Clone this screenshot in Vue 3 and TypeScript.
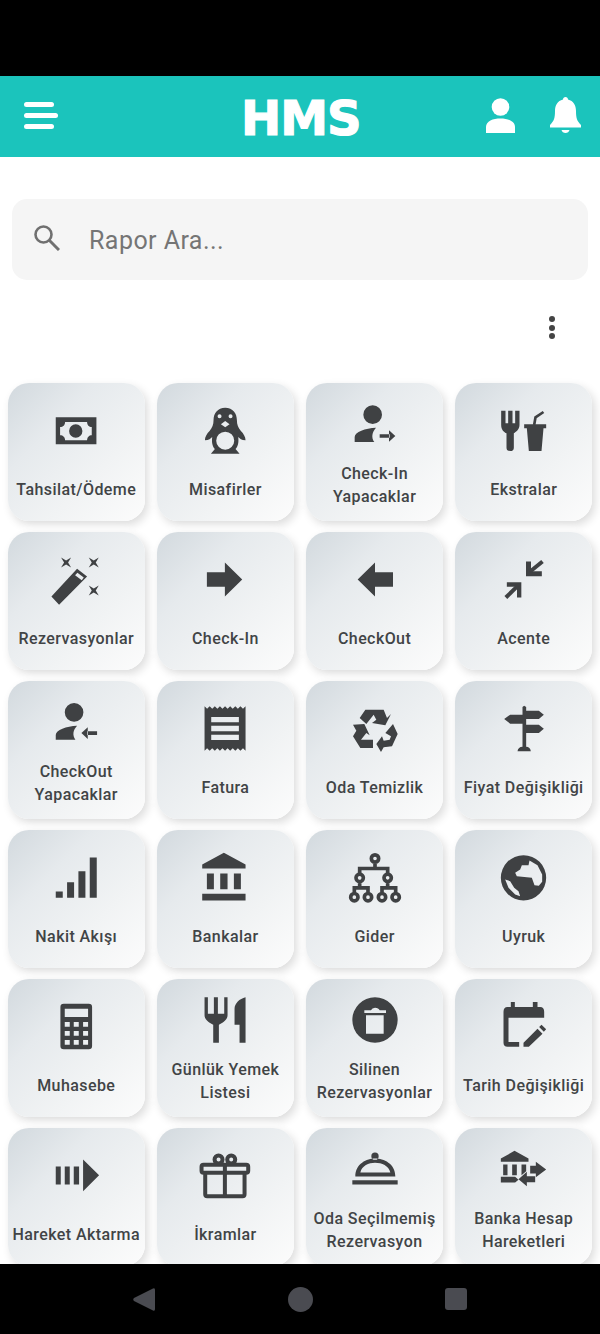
<script setup lang="ts">
interface Shape { d: string; sw?: number }
interface Item { label: string; vb: string; shapes: Shape[] }

const circle = (cx: number, cy: number, r: number): string =>
  `M${cx - r} ${cy}a${r} ${r} 0 1 0 ${r * 2} 0a${r} ${r} 0 1 0 ${-r * 2} 0Z`
const rect = (x: number, y: number, x2: number, y2: number): string =>
  `M${x} ${y}H${x2}V${y2}H${x}Z`
const star = (cx: number, cy: number): string =>
  `M${cx - 15} ${cy - 15}L${cx} ${cy - 6}L${cx + 15} ${cy - 15}L${cx + 6} ${cy}L${cx + 15} ${cy + 15}L${cx} ${cy + 6}L${cx - 15} ${cy + 15}L${cx - 6} ${cy}Z`

function receipt(): string {
  const x0 = 615
  const step = 123 / 8
  let d = `M${x0} 95`
  for (let i = 0; i < 8; i++) {
    d += `L${x0 + step * (i + 0.5)} 102L${x0 + step * (i + 1)} 95`
  }
  d += 'V228'
  for (let i = 7; i >= 0; i--) {
    d += `L${x0 + step * (i + 0.5)} 221L${x0 + step * i} 228`
  }
  return d + 'Z'
}

const keys: string[] = []
for (const y of [143, 170, 197]) {
  for (const x of [195, 222, 250]) keys.push(rect(x, y, x + 15, y + 14))
}

const items: Item[] = [
  { label: 'Tahsilat/Ödeme', vb: '156.75 96', shapes: [{ d: rect(168, 127, 290, 208) + 'M196 141H262C262 150 268 156 276 156V181C268 181 262 187 262 196H196C196 187 190 181 181 181V156C190 156 196 150 196 141Z' + circle(228, 168, 20) }] },
  { label: 'Misafirler', vb: '604.35 96', shapes: [{ d: 'M677 98C700 98 712 115 712 135C712 150 716 158 724 168C732 176 738 186 738 196C726 196 720 190 716 186C718 200 716 214 708 222L720 236H634L646 222C638 214 636 200 638 186C634 190 628 196 616 196C616 186 622 176 630 168C638 158 642 150 642 135C642 115 654 98 677 98Z' + circle(660, 124, 6) + circle(693, 124, 6) + 'M677 138L690 148L677 157L664 148Z' + circle(677, 197, 27) }] },
  { label: 'Check-In\nYapacaklar', vb: '152 72', shapes: [{ d: circle(217, 116, 28) + 'M163 198V183C163 168 195 156 227 155C215 168 212 185 222 198Z' + rect(238, 175, 268, 185) + 'M266 163L285 180L266 197Z' }] },
  { label: 'Ekstralar', vb: '599.5 96', shapes: [
    { d: 'M603 107H616V145H624V107H637V145H645V107H658V150C658 165 645 172 641 175V218Q641 228 630 228Q619 228 619 218V175C612 172 603 165 603 150Z' + rect(672, 148, 738, 160) + 'M680 160H730L724 228H686Z' },
    { d: 'M702 150L706 127L730 111', sw: 8 }
  ] },
  { label: 'Rezervasyonlar', vb: '156.75 543.6', shapes: [{ d: 'M155 665L232 582L262 605L178 690ZM233 594L252 608L246 616L226 601Z' + star(199, 563) + star(282, 563) + star(282, 647) }] },
  { label: 'Check-In', vb: '604.35 543.6', shapes: [{ d: 'M622 592H676V563L728 614L676 665V636H622Z' }] },
  { label: 'CheckOut', vb: '152 543.6', shapes: [{ d: 'M278 592H224V563L172 614L224 665V636H278Z' }] },
  { label: 'Acente', vb: '599.5 543.6', shapes: [
    { d: 'M685 560V597H725', sw: 15 },
    { d: 'M690 590L727 560', sw: 12 },
    { d: 'M620 629H657V668', sw: 13 },
    { d: 'M652 634L617 668', sw: 12 }
  ] },
  { label: 'CheckOut\nYapacaklar', vb: '156.75 66.9', shapes: [{ d: circle(223, 110, 28) + 'M168 192V178C168 163 200 151 232 150C220 163 217 178 227 192Z' + rect(262, 167, 292, 178) + 'M264 155L245 172L264 190Z' }] },
  { label: 'Fatura', vb: '604.35 90.9', shapes: [{ d: receipt() + rect(635, 127, 718, 143) + rect(635, 153, 718, 170) + rect(635, 180, 718, 196) }] },
  { label: 'Oda Temizlik', vb: '152 90.9', shapes: [{ d: 'M178 130L195 105H250L260 130L272 118L255 152L215 145L228 135L220 120L198 148ZM158 150L192 148L208 182L198 175L182 195H218V220H180L158 185L168 168ZM255 175L278 148L292 178L275 215L250 218L242 232L228 208L245 185L250 198L268 195L272 185Z' }] },
  { label: 'Fiyat Değişikliği', vb: '599.5 90.9', shapes: [{ d: 'M612 133L630 120H667V147H630ZM678 108H716L731 120L716 133H678ZM678 150H716L731 162L716 175H678ZM667 97L672 93L678 97V216H667ZM652 230Q654 216 667 216H678Q690 216 692 230Z' }] },
  { label: 'Nakit Akışı', vb: '156.75 538.5', shapes: [{ d: rect(168, 651, 189, 670) + rect(202, 623, 223, 670) + rect(236, 590, 257, 670) + rect(270, 549, 291, 670) }] },
  { label: 'Bankalar', vb: '604.35 538.5', shapes: [{ d: 'M673 535L738 570V582H608V570Z' + rect(622, 597, 643, 644) + rect(662, 597, 684, 644) + rect(703, 597, 724, 644) + rect(608, 658, 738, 678) }] },
  { label: 'Gider', vb: '152 538.5', shapes: [{ d: circle(224, 552, 11) + circle(178, 610, 11) + circle(262, 610, 11) + circle(162, 668, 11) + circle(203, 668, 11) + circle(245, 668, 11) + circle(286, 668, 11) + 'M224 563V582M178 599V582H262V599M178 621V640M162 657V640H203V657M262 621V640M245 657V640H286V657', sw: 11 }] },
  { label: 'Uyruk', vb: '599.5 538.5', shapes: [{ d: circle(670, 610, 68) + 'M688 558L712 572L726 600V622L716 634L703 632L695 610L650 605L645 595L660 585L665 572H685ZM615 615L630 620L642 640L655 650L660 665L645 660L625 640Z' }] },
  { label: 'Muhasebe', vb: '156.75 86.1', shapes: [{ d: 'M192 88H267Q277 88 277 98V215Q277 225 267 225H192Q182 225 182 215V98Q182 88 192 88Z' + rect(195, 103, 265, 128) + keys.join('') }] },
  { label: 'Günlük Yemek\nListesi', vb: '604.35 62.1', shapes: [{ d: 'M615 66H625V115H643V66H655V115H674V66H684V120C684 135 665 145 658 148V202H641V148C634 145 615 135 615 120ZM738 66V202H720V148H705V100C705 85 720 70 738 66Z' }] },
  { label: 'Silinen\nRezervasyonlar', vb: '152 62.1', shapes: [{ d: circle(224, 134, 68) + 'M192 105H212Q215 97 224 97Q235 97 238 105H257V113H192ZM197 120H250V175H197Z' }] },
  { label: 'Tarih Değişikliği', vb: '599.5 86.1', shapes: [{ d: 'M625 130V203H657V217H622Q610 217 610 205V112Q610 98 622 98H632V83H644V98H698V83H712V98H720Q732 98 732 112V130ZM670 205L712 163L727 178L686 217H670ZM717 158L724 151L738 165L731 172Z' }] },
  { label: 'Hareket Aktarma', vb: '156.75 533.4', shapes: [{ d: rect(168, 577, 183, 631) + rect(195, 577, 210, 631) + rect(222, 577, 238, 631) + 'M250 556L298 603L250 651Z' }] },
  { label: 'İkramlar', vb: '604.35 533.4', shapes: [{ d: 'M612 572H740Q746 572 746 578V590Q746 596 740 596H612Q606 596 606 590V578Q606 572 612 572ZM617 596V660Q617 666 623 666H729Q735 666 735 660V596M676 572V666' + circle(657, 556, 12) + circle(695, 556, 12), sw: 12 }] },
  { label: 'Oda Seçilmemiş\nRezervasyon', vb: '152 509.4', shapes: [{ d: rect(156, 615, 292, 628) + 'M165 604C165 565 200 550 224 550C250 550 285 565 285 604ZM180 592C185 572 205 563 224 563C245 563 265 572 270 592Z' + circle(224, 543, 11) }] },
  { label: 'Banka Hesap\nHareketleri', vb: '599.5 509.4', shapes: [{ d: 'M643 527L685 550V560H602V550Z' + rect(609, 568, 622, 600) + rect(636, 568, 650, 600) + 'M664 568H678V588L664 600Z' + 'M602 605H645L655 614L645 622H602ZM690 572H707V560L738 583L707 606V595H690ZM705 603H680V590L655 612L680 633V621H705Z' }] }
]
</script>

<template>
  <div class="app">
    <div class="status"></div>
    <header class="header">
      <div class="left">
        <div class="burger">
          <span class="b1"></span>
          <span class="b2"></span>
          <span class="b1"></span>
        </div>
      </div>
      <div class="logo">HMS</div>
      <div class="right">
        <svg class="person" viewBox="0 0 29 35" aria-hidden="true">
          <circle cx="14.5" cy="9" r="8.8" fill="#fff" />
          <path d="M0 35V29C0 23 7 20.5 14.5 20.5S29 23 29 29V35Z" fill="#fff" />
        </svg>
        <svg class="bell" viewBox="0 0 31 36" aria-hidden="true">
          <path d="M15.5 0C17 0 18 1 18 2.6C23.5 4 26 8.5 26 14C26 21 27 24 31 28V30.6H0V28C4 24 5 21 5 14C5 8.5 7.5 4 13 2.6C13 1 14 0 15.5 0Z" fill="#fff" />
          <path d="M11.5 33H19.5C19 35 17.5 36 15.5 36S12 35 11.5 33Z" fill="#fff" />
        </svg>
      </div>
    </header>

    <main class="main">
      <div class="search">
        <svg class="mag" viewBox="0 0 26 26" aria-hidden="true">
          <circle cx="9.5" cy="9.5" r="8" fill="none" stroke="#707070" stroke-width="2.6" />
          <path d="M15.5 15.5L25 25" stroke="#707070" stroke-width="3" fill="none" />
        </svg>
        <span class="placeholder">Rapor Ara...</span>
      </div>

      <div class="tools">
        <div class="dots"><i></i><i></i><i></i></div>
      </div>

      <div class="grid">
        <div
          v-for="item in items"
          :key="item.label"
          class="card"
          :class="{ double: item.label.includes('\n') }"
        >
          <svg class="icon" :viewBox="item.vb + ' 144 144'" aria-hidden="true">
            <path
              v-for="(s, i) in item.shapes"
              :key="i"
              :d="s.d"
              :fill="s.sw ? 'none' : '#3f4143'"
              :stroke="s.sw ? '#3f4143' : 'none'"
              :stroke-width="s.sw ?? 0"
              fill-rule="evenodd"
            />
          </svg>
          <div class="label">{{ item.label }}</div>
        </div>
      </div>
    </main>

    <nav class="nav">
      <svg class="back" viewBox="0 0 22 25" aria-hidden="true">
        <path d="M20 1.5Q22 .5 22 3V22Q22 24.5 20 23.5L1 14Q-.5 12.5 1 11Z" fill="#4a4b51" />
      </svg>
      <span class="home"></span>
      <span class="recent"></span>
    </nav>
  </div>
</template>

<style scoped>
.app {
  width: 600px;
  height: 1334px;
  display: flex;
  flex-direction: column;
  overflow: hidden;
  background: #fff;
  font-family: Roboto, "Noto Sans", sans-serif;
}
.status {
  height: 76px;
  background: #000;
  flex: none;
}
.header {
  height: 81px;
  flex: none;
  background: #1bc4bc;
  display: grid;
  grid-template-columns: 1fr auto 1fr;
  align-items: center;
  padding: 0 19.5px 3px 24px;
  box-sizing: border-box;
}
.burger {
  display: flex;
  flex-direction: column;
  gap: 6px;
  width: 34px;
}
.burger span {
  display: block;
  height: 5px;
  border-radius: 3px;
  background: #fff;
}
.b1 { width: 30px; }
.b2 { width: 34px; }
.logo {
  font-family: "DejaVu Sans", sans-serif;
  font-weight: 700;
  font-size: 48px;
  line-height: 40px;
  color: #fff;
  letter-spacing: -1px;
  -webkit-text-stroke: 1.2px #fff;
  transform: translate(-1.5px, 3px);
}
.right {
  display: flex;
  justify-content: flex-end;
  align-items: center;
  gap: 34.5px;
}
.person { width: 29px; height: 35px; }
.bell { width: 31px; height: 36px; }
.main {
  flex: 1;
  min-height: 0;
  overflow: hidden;
}
.search {
  margin: 41.5px 12px 0;
  height: 81.5px;
  border-radius: 15px;
  background: #f5f5f5;
  display: flex;
  align-items: center;
  padding-left: 22px;
}
.mag {
  width: 26px;
  height: 26px;
  flex: none;
  margin-top: -3px;
}
.placeholder {
  margin-left: 29px;
  margin-top: 2px;
  font-size: 25px;
  letter-spacing: 0.45px;
  color: #757575;
}
.tools {
  height: 103px;
  box-sizing: border-box;
  display: flex;
  justify-content: flex-end;
  padding: 36px 45px 0 0;
}
.dots {
  display: flex;
  flex-direction: column;
  gap: 2.7px;
}
.dots i {
  display: block;
  width: 6px;
  height: 6px;
  border-radius: 50%;
  background: #444;
}
.grid {
  display: grid;
  grid-template-columns: repeat(4, 137.5px);
  grid-auto-rows: 137.5px;
  gap: 11.55px 11.67px;
  padding: 0 7.5px;
}
.card {
  border-radius: 21px;
  background: linear-gradient(135deg, #d2d9de 0%, #e6eaed 32%, #f1f3f4 65%, #fcfcfc 100%);
  box-shadow: 3px 4px 10px rgba(0, 0, 0, 0.14), -3px -3px 8px rgba(255, 255, 255, 0.9);
  display: flex;
  flex-direction: column;
  align-items: center;
  justify-content: center;
  gap: 23.5px;
  padding-top: 4px;
  box-sizing: border-box;
}
.card.double { gap: 14.5px; }
.icon {
  width: 48px;
  height: 48px;
  flex: none;
  overflow: visible;
}
.label {
  font-size: 16px;
  font-weight: 500;
  line-height: 23px;
  letter-spacing: 0.42px;
  color: #414446;
  text-align: center;
  white-space: pre-line;
}
.nav {
  height: 70px;
  flex: none;
  background: #000;
  display: flex;
  align-items: center;
  justify-content: space-between;
  padding: 0 133px;
  position: relative;
}
.back { width: 22px; height: 25px; }
.home {
  width: 25px;
  height: 25px;
  border-radius: 50%;
  background: #4a4b51;
}
.recent {
  width: 22px;
  height: 22px;
  border-radius: 3px;
  background: #4a4b51;
}
</style>
